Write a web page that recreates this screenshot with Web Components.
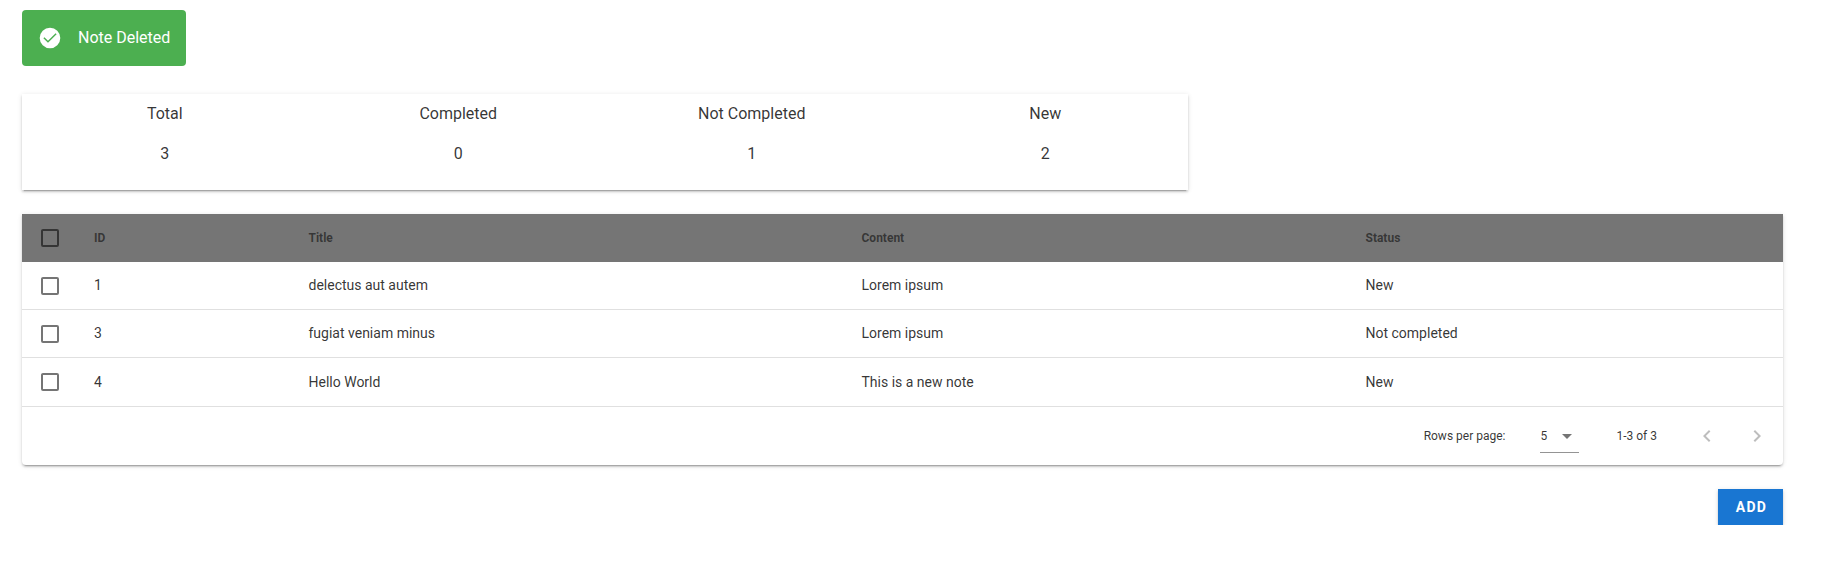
<!DOCTYPE html>
<html lang="en">
<head>
<meta charset="utf-8">
<title>Notes</title>
<style>
html,body{margin:0;padding:0;background:#fff}
body{font-family:Roboto,"Liberation Sans",sans-serif;font-size:16px;line-height:24px;color:rgba(0,0,0,.8)}
</style>
</head>
<body>
<notes-app></notes-app>
<script>
const define = (name, html) => {
  const t = document.createElement('template');
  t.innerHTML = html;
  customElements.define(name, class extends HTMLElement {
    constructor() {
      super();
      this.attachShadow({mode: 'open'}).append(t.content.cloneNode(true));
    }
  });
};

define('app-alert', `<style>
:host{display:flex;align-items:center;box-sizing:border-box;width:164px;height:56px;padding:0 16px;border-radius:4px;background:#4caf50;color:#fff;white-space:nowrap}
svg{width:24px;height:24px;margin-right:16px;fill:currentColor;flex:none}
</style><svg viewBox="0 0 24 24"><path d="M12 1.7a10.3 10.3 0 1 0 0 20.6 10.3 10.3 0 0 0 0-20.6zM10 16.8l-4.6-4.6 1-1L10 14.8l7.6-7.6 1 1z"/></svg><span><slot></slot></span>`);

define('stat-item', `<style>
:host{display:flex;flex-direction:column;align-items:center;gap:16px;flex:1 1 0;min-width:0}
</style><slot name="label"></slot><slot></slot>`);

define('stat-card', `<style>
:host{display:block;box-sizing:border-box;width:1166px;height:96px;padding:8px 0 0;box-shadow:0 3px 1px -2px rgba(0,0,0,.2),0 2px 2px 0 rgba(0,0,0,.14),0 1px 5px 0 rgba(0,0,0,.12);background:#fff}
div{display:flex;margin:0 -4px}
</style><div><slot></slot></div>`);

define('check-box', `<style>
:host{display:block;width:24px;height:24px;color:rgba(0,0,0,.54)}
svg{display:block;fill:currentColor}
</style><svg width="24" height="24" viewBox="0 0 24 24"><path d="M19 3H5c-1.11 0-2 .89-2 2v14a2 2 0 0 0 2 2h14a2 2 0 0 0 2-2V5a2 2 0 0 0-2-2m0 2v14H5V5h14z"/></svg>`);

define('note-row', `<style>
:host{display:grid;grid-template-columns:56px 214.5px 553px 504px 1fr;align-items:start;box-sizing:border-box;height:48px;font-size:14px;line-height:20px;border-bottom:1px solid rgba(0,0,0,.12)}
:host([last]){height:49px}
:host([head]){height:48px;border:0;background:#757575;color:rgba(0,0,0,.54);font-size:12px;font-weight:700}
div{padding:13px 16px 0}
.c{padding-top:12px}
:host([last]) div:not(.c){padding-top:14px}
:host([head]) div:not(.c){padding-top:14px}
</style><div class="c"><check-box></check-box></div>
<div><slot name="id"></slot></div><div><slot name="title"></slot></div><div><slot name="content"></slot></div><div><slot name="status"></slot></div>`);

define('table-footer', `<style>
:host{display:flex;align-items:center;justify-content:flex-end;box-sizing:border-box;height:58px;padding-right:14px;font-size:12px;line-height:16px}
.select{display:flex;align-items:center;justify-content:space-between;box-sizing:border-box;width:39px;height:32px;margin:1px 37px 0 35px;border-bottom:1px solid rgba(0,0,0,.42)}
.select svg{width:24px;height:24px;fill:rgba(0,0,0,.54)}
.nav{display:flex;gap:26px;margin-left:38px}
.nav svg{display:block;width:24px;height:24px;fill:rgba(0,0,0,.26)}
</style><span>Rows per page:</span>
<div class="select"><span>5</span><svg viewBox="0 0 24 24"><path d="M7 10l5 5 5-5z"/></svg></div>
<span>1-3 of 3</span>
<div class="nav"><svg viewBox="0 0 24 24"><path d="M15.41 16.58 10.83 12l4.58-4.59L14 6l-6 6 6 6z"/></svg><svg viewBox="0 0 24 24"><path d="M8.59 16.58 13.17 12 8.59 7.41 10 6l6 6-6 6z"/></svg></div>`);

define('data-table', `<style>
:host{display:block;background:#fff;border-radius:0 0 4px 4px;box-shadow:0 3px 1px -2px rgba(0,0,0,.2),0 2px 2px 0 rgba(0,0,0,.14),0 1px 5px 0 rgba(0,0,0,.12)}
</style><slot></slot>`);

define('app-button', `<style>
:host{display:block}
button{display:block;box-sizing:border-box;width:65px;height:36px;padding:1px 0 0 1px;border:0;background:#1976d2;color:#fff;font:700 14px/35px Roboto,"Liberation Sans",sans-serif;letter-spacing:1.25px;text-indent:1px;box-shadow:0 3px 1px -2px rgba(0,0,0,.2),0 2px 2px 0 rgba(0,0,0,.14),0 1px 5px 0 rgba(0,0,0,.12)}
</style><button type="button"><slot></slot></button>`);

const row = (a, attr = '') => `<note-row ${attr}><span slot="id">${a[0]}</span><span slot="title">${a[1]}</span><span slot="content">${a[2]}</span><span slot="status">${a[3]}</span></note-row>`;
const stat = (label, n) => `<stat-item><span slot="label">${label}</span><span>${n}</span></stat-item>`;

define('notes-app', `<style>
:host{display:flex;flex-direction:column;align-items:flex-start;box-sizing:border-box;padding:10px 54px 0 22px}
stat-card{margin-top:28px}
data-table{align-self:stretch;margin-top:24px}
app-button{align-self:flex-end;margin-top:24px}
</style>
<app-alert>Note Deleted</app-alert>
<stat-card>${stat('Total', 3)}${stat('Completed', 0)}${stat('Not Completed', 1)}${stat('New', 2)}</stat-card>
<data-table>
${row(['ID', 'Title', 'Content', 'Status'], 'head')}
${row([1, 'delectus aut autem', 'Lorem ipsum', 'New'])}
${row([3, 'fugiat veniam minus', 'Lorem ipsum', 'Not completed'])}
${row([4, 'Hello World', 'This is a new note', 'New'], 'last')}
<table-footer></table-footer>
</data-table>
<app-button>ADD</app-button>`);
</script>
</body>
</html>
